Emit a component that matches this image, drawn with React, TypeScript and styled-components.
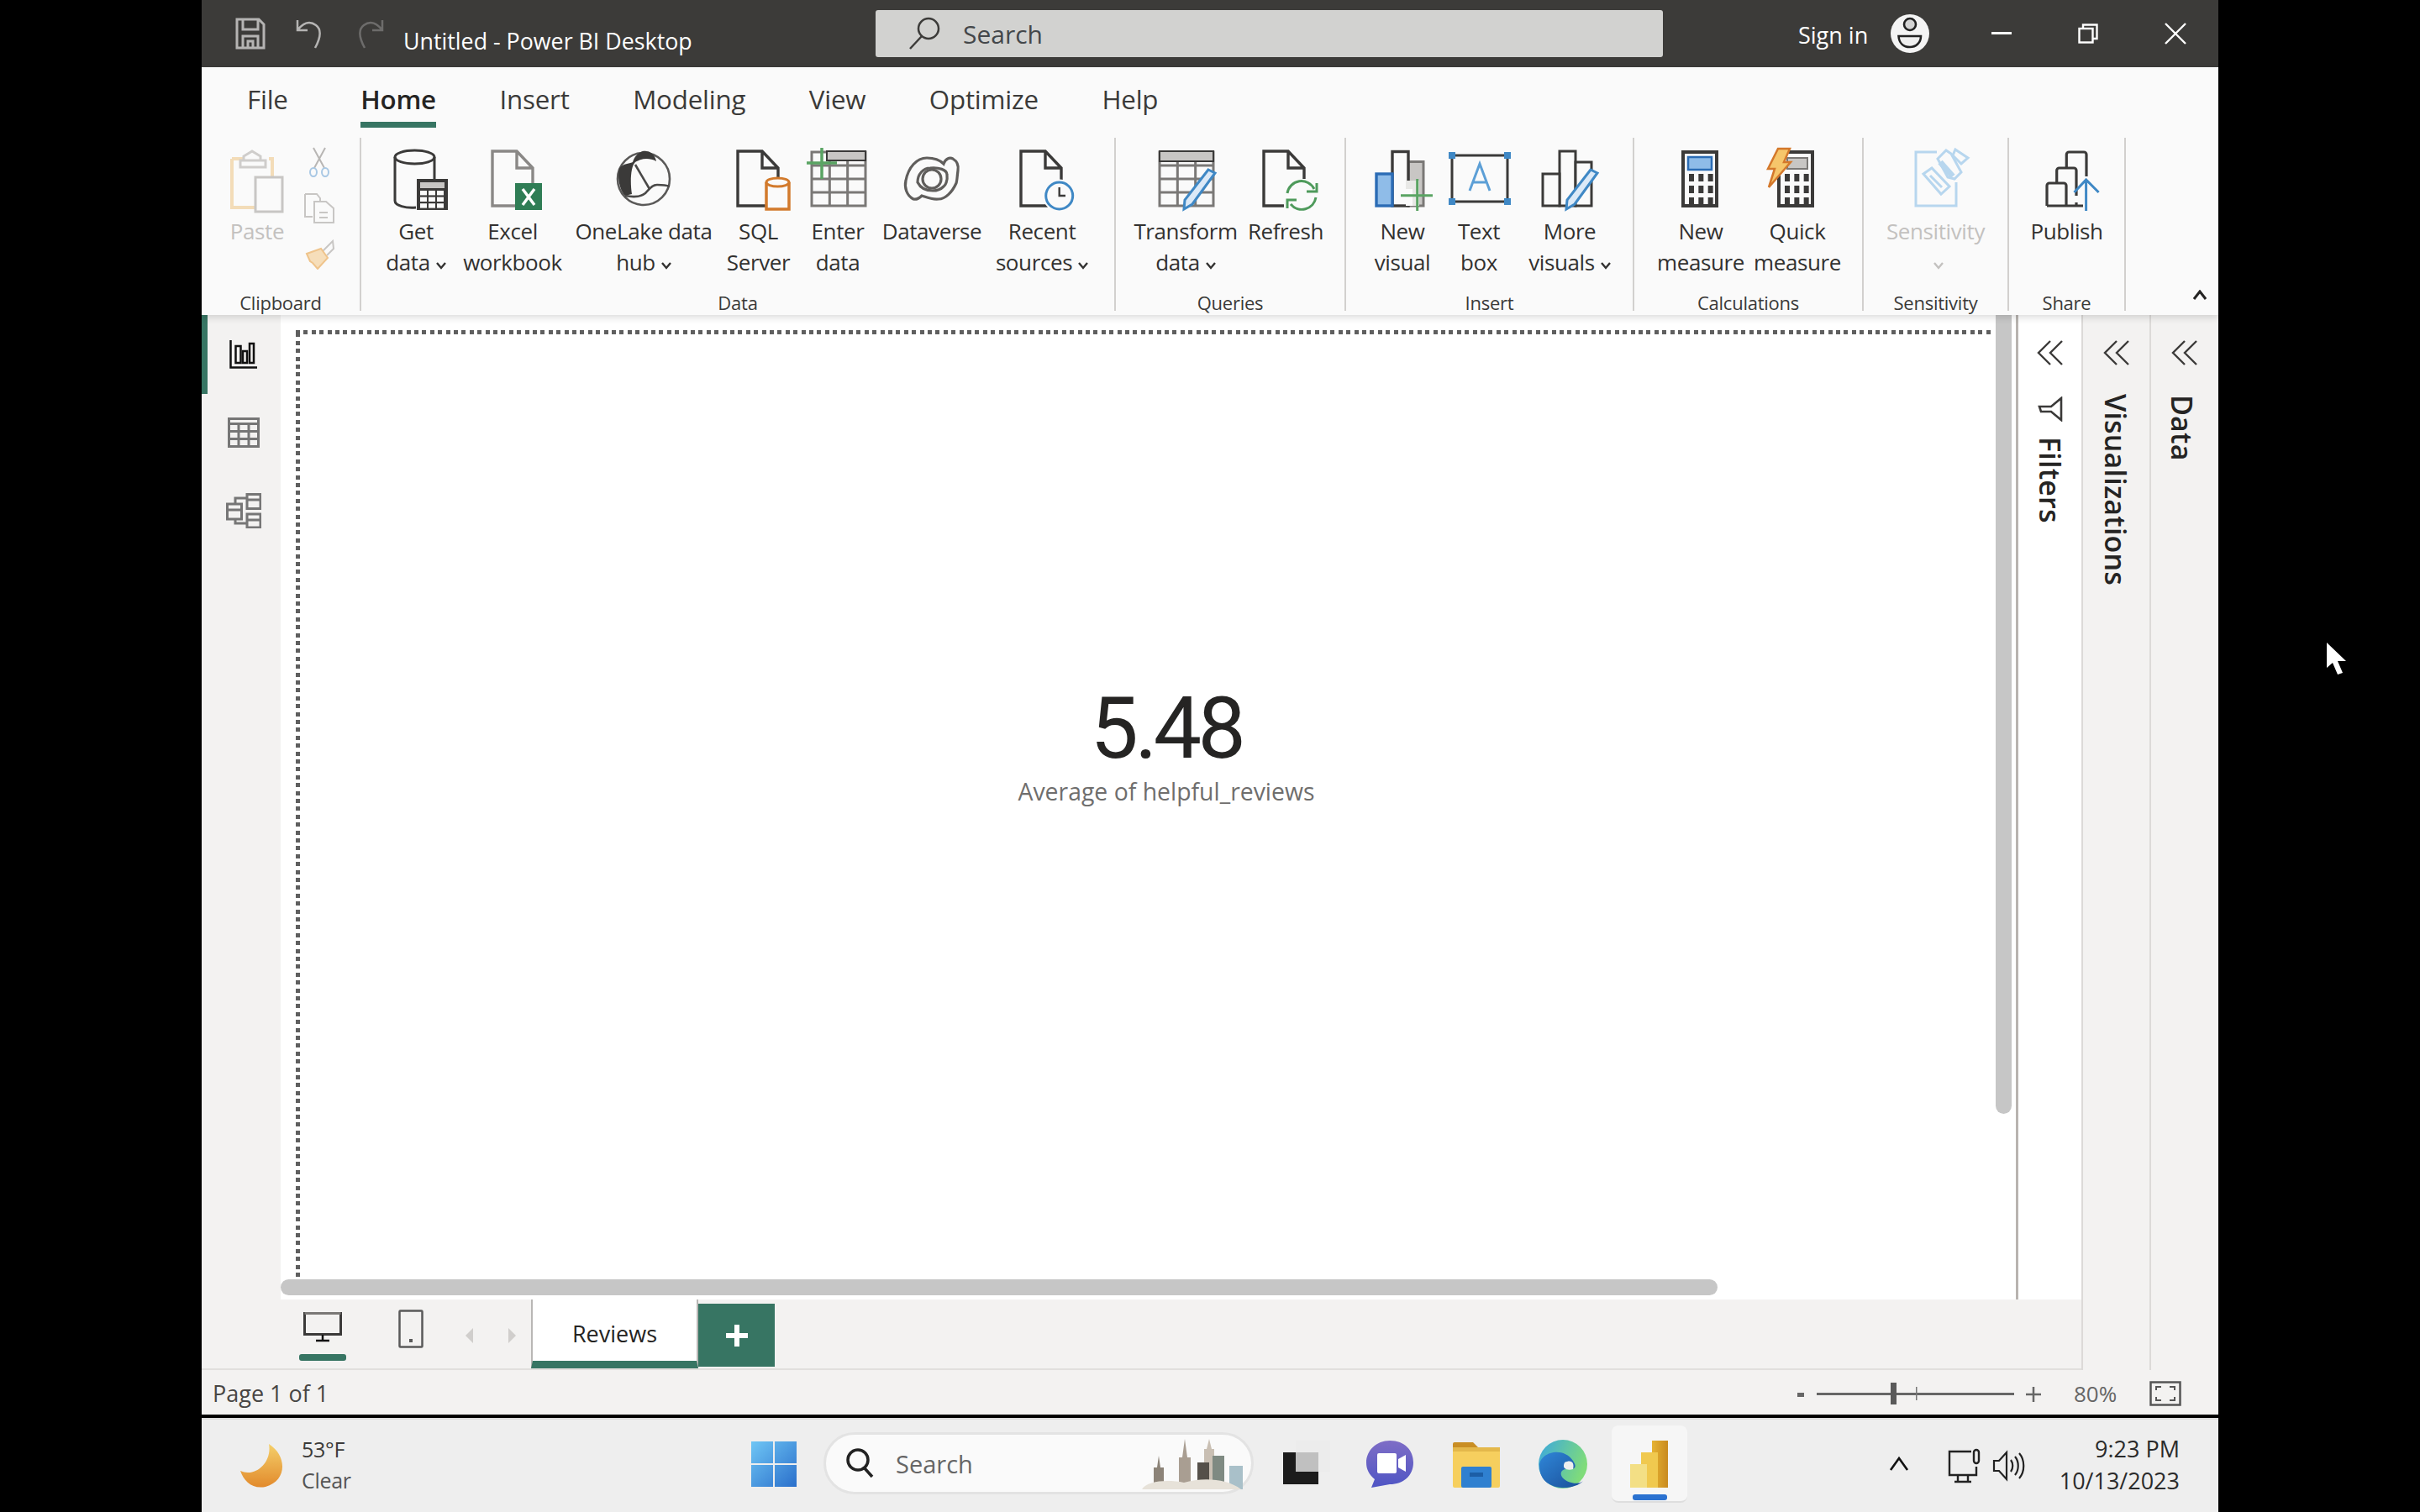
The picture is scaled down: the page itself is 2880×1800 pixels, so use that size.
import React from "react";
import styled, { createGlobalStyle } from "styled-components";

const GlobalStyle = createGlobalStyle`
  html, body { margin: 0; padding: 0; background: #000; }
  body { font-family: "Open Sans", "Liberation Sans", sans-serif; color: #252423; }
  * { box-sizing: border-box; }
`;

const Screen = styled.div`
  width: 2880px;
  height: 1800px;
  background: #000;
  padding: 0 240px;
  position: relative;
  overflow: hidden;
`;
const Desktop = styled.div`
  width: 2400px;
  height: 1800px;
  display: flex;
  flex-direction: column;
`;

/* title bar */
const TitleBar = styled.header`
  height: 80px;
  flex: none;
  background: #3c3b39;
  display: flex;
  align-items: center;
  color: #fff;
`;
const QuickAccess = styled.div`
  width: 802px;
  flex: none;
  display: flex;
  align-items: center;
  padding-left: 40px;
  gap: 36px;
`;
const WindowTitle = styled.span`
  font-size: 26.8px;
  padding-top: 16px;
  margin-left: -14px;
  white-space: nowrap;
`;
const SearchBox = styled.div`
  width: 937px;
  height: 56px;
  flex: none;
  background: #d2d2d0;
  border-radius: 3px;
  display: flex;
  align-items: center;
  gap: 26px;
  padding-left: 38px;
  color: #44474a;
  font-size: 30px;
`;
const TitleRight = styled.div`
  flex: 1;
  display: flex;
  align-items: center;
  padding-left: 161px;
`;
const SignIn = styled.span`
  font-size: 27px;
  width: 110px;
  padding-top: 2px;
  white-space: nowrap;
`;
const WinButtons = styled.div`
  display: flex;
  margin-left: 74px;
  gap: 79px;
  align-items: center;
`;

/* ribbon */
const Ribbon = styled.section`
  height: 295px;
  flex: none;
  background: #fafafa;
  position: relative;
  z-index: 2;
  box-shadow: 0 3px 8px rgba(0, 0, 0, 0.14);
`;
const MenuBar = styled.nav`
  height: 72px;
  display: flex;
  padding-left: 54px;
  gap: 75.5px;
`;
const MenuItem = styled.div<{ $active?: boolean; $first?: boolean }>`
  height: 72px;
  padding-top: 14px;
  font-size: 31.3px;
  line-height: 48px;
  letter-spacing: -0.2px;
  color: ${(p) => (p.$active ? "#252423" : "#3b3a39")};
  font-weight: ${(p) => (p.$active ? 600 : 400)};
  border-bottom: 7px solid ${(p) => (p.$active ? "#377563" : "transparent")};
  margin-right: ${(p) => (p.$first ? "11px" : "0")};
  white-space: nowrap;
`;
const GroupRow = styled.div`
  display: flex;
  padding-top: 12px;
  height: 218px;
`;
const Group = styled.div<{ $w: number }>`
  width: ${(p) => p.$w}px;
  flex: none;
  height: 206px;
  border-right: 2px solid #d2d0ce;
  padding-top: 11px;
  display: flex;
  flex-direction: column;
`;
const GroupTools = styled.div<{ $pl?: number }>`
  height: 172px;
  display: flex;
  padding-left: ${(p) => p.$pl ?? 0}px;
`;
const GroupLabel = styled.div`
  height: 23px;
  line-height: 26px;
  font-size: 22px;
  letter-spacing: -0.25px;
  text-align: center;
  color: #3b3a39;
`;
const Tool = styled.div<{ $w: number; $off?: boolean }>`
  width: ${(p) => p.$w}px;
  flex: none;
  display: flex;
  flex-direction: column;
  align-items: center;
  color: ${(p) => (p.$off ? "#c3c1bf" : "#323130")};
`;
const ToolIcon = styled.svg`
  width: 80px;
  height: 80px;
  flex: none;
  margin-bottom: 2px;
  overflow: visible;
`;
const ToolLabel = styled.div`
  font-size: 26px;
  line-height: 37px;
  letter-spacing: -0.4px;
  text-align: center;
  white-space: nowrap;
`;
const SmallTools = styled.div`
  width: 44px;
  flex: none;
  margin-left: 4px;
  display: flex;
  flex-direction: column;
  align-items: center;
  gap: 19px;
`;
const CollapseSlot = styled.div`
  flex: 1;
  display: flex;
  justify-content: flex-end;
  align-items: flex-end;
  height: 193px;
  padding-right: 14px;
`;

/* body */
const Body = styled.div`
  flex: 1;
  min-height: 0;
  display: flex;
  background: #f3f2f1;
`;
const MainColumn = styled.div`
  width: 2237px;
  flex: none;
  display: flex;
  flex-direction: column;
`;
const Workspace = styled.div`
  height: 1172px;
  flex: none;
  display: flex;
`;
const SideNav = styled.nav`
  width: 94px;
  flex: none;
  display: flex;
  flex-direction: column;
`;
const NavItem = styled.div<{ $active?: boolean; $h: number }>`
  height: ${(p) => p.$h}px;
  display: flex;
  align-items: center;
  justify-content: center;
  border-left: 7px solid ${(p) => (p.$active ? "#377563" : "transparent")};
  padding-right: 2px;
`;
const Canvas = styled.main`
  flex: 1;
  min-width: 0;
  background: #fff;
  display: grid;
  grid-template-columns: 1fr 19px;
  grid-template-rows: 1fr 19px;
  padding: 0 5px 5px 0;
  row-gap: 3px;
  column-gap: 5px;
`;
const PageArea = styled.div`
  padding: 18px 0 0 18px;
  min-height: 0;
`;
const ReportPage = styled.div`
  height: 100%;
  background-image:
    repeating-linear-gradient(90deg, #5f5f5f 0 5px, transparent 5px 9.4px),
    repeating-linear-gradient(0deg, #5f5f5f 0 5px, transparent 5px 9.4px);
  background-size: 100% 5px, 5px 100%;
  background-position: 0 0, 0 0;
  background-repeat: no-repeat;
  display: flex;
  flex-direction: column;
  align-items: center;
  justify-content: center;
  padding: 0 0 136px 54px;
`;
const KpiValue = styled.div`
  font-family: Roboto, "Liberation Sans", sans-serif;
  font-size: 102px;
  line-height: 100px;
  letter-spacing: -4.5px;
  color: #252423;
`;
const KpiLabel = styled.div`
  font-size: 28.4px;
  line-height: 36px;
  margin-top: 7px;
  color: #6f6e6d;
`;
const VScroll = styled.div`
  background: #c6c6c6;
  height: 951px;
  border-radius: 0 0 10px 10px;
`;
const HScroll = styled.div`
  background: #c6c6c6;
  width: 1710px;
  height: 19px;
  border-radius: 10px;
  grid-column: 1 / 3;
`;
const Pane = styled.aside<{ $w: number; $bg: string; $line: string; $lw?: number }>`
  width: ${(p) => p.$w}px;
  flex: none;
  background: ${(p) => p.$bg};
  border-left: ${(p) => p.$lw ?? 2}px solid ${(p) => p.$line};
  display: flex;
  flex-direction: column;
  align-items: center;
  padding-top: 30px;
`;
const PaneTitle = styled.div<{ $mt: number; $ml?: number }>`
  writing-mode: vertical-rl;
  font-size: 34px;
  font-weight: 600;
  line-height: 40px;
  letter-spacing: 0.2px;
  color: #252423;
  margin-top: ${(p) => p.$mt}px;
  margin-left: ${(p) => p.$ml ?? 0}px;
`;
const PaneIcon = styled.svg`
  width: 30px;
  height: 30px;
  flex: none;
  margin-top: 37px;
  transform: rotate(90deg);
`;

/* page tabs */
const TabBar = styled.div`
  height: 85px;
  flex: none;
  display: flex;
  padding-left: 98px;
  border-bottom: 3px solid #e1dfdd;
`;
const ViewButton = styled.div<{ $w: number; $ml?: number; $pt?: number; $active?: boolean }>`
  width: ${(p) => p.$w}px;
  margin-left: ${(p) => p.$ml ?? 0}px;
  height: 73px;
  flex: none;
  display: flex;
  justify-content: center;
  padding-top: ${(p) => p.$pt ?? 12}px;
  border-bottom: 8px solid transparent;
  position: relative;
  ${(p) =>
    p.$active &&
    `&::after{content:'';position:absolute;left:${(p.$w - 56) / 2}px;right:${(p.$w - 56) / 2}px;bottom:-8px;height:8px;background:#377563;border-radius:3px;}`}
`;
const PageTab = styled.div`
  width: 199px;
  height: 82px;
  flex: none;
  background: #fff;
  border-left: 2px solid #b9b7b5;
  border-right: 2px solid #b9b7b5;
  border-bottom: 9px solid #377563;
  padding-top: 7px;
  font-size: 27px;
  display: flex;
  align-items: center;
  justify-content: center;
  color: #252423;
`;
const AddTab = styled.div`
  width: 91px;
  height: 75px;
  margin-top: 5px;
  flex: none;
  background: #377563;
  display: flex;
  align-items: center;
  justify-content: center;
`;

/* status bar */
const StatusBar = styled.footer`
  height: 53px;
  flex: none;
  background: #f3f2f1;
  display: flex;
  align-items: center;
  padding: 2px 44px 0 13px;
  font-size: 27px;
  color: #484644;
`;
const StatusSpacer = styled.div`
  flex: 1;
`;
const ZoomSlider = styled.svg`
  width: 300px;
  height: 40px;
  flex: none;
`;
const ZoomValue = styled.span`
  width: 54px;
  margin: 0 36px 0 30px;
  font-size: 26px;
  color: #666;
  white-space: nowrap;
`;

const Divider = styled.div`
  height: 4px;
  flex: none;
  background: #000;
`;

/* taskbar */
const Taskbar = styled.footer`
  height: 112px;
  flex: none;
  background: #eeeeee;
  border-top: 2px solid #dcdcdc;
  display: grid;
  grid-template-columns: 654px 1120px 1fr;
  align-items: center;
`;
const Weather = styled.div`
  display: flex;
  align-items: center;
  gap: 20px;
  padding-left: 46px;
`;
const WeatherText = styled.div`
  font-size: 25px;
  line-height: 37px;
  letter-spacing: -0.3px;
  margin-top: -3px;
  color: #3b3a39;
  > span {
    display: block;
    color: #555;
  }
`;
const TaskCenter = styled.div`
  display: flex;
  align-items: center;
  padding-bottom: 4px;
`;
const PillSearch = styled.div`
  width: 512px;
  height: 74px;
  margin: 0 7px 2px 32px;
  flex: none;
  background: #fafafa;
  border: 3px solid #e3e3e3;
  border-radius: 37px;
  display: flex;
  align-items: center;
  padding: 0 8px 0 23px;
  gap: 24px;
  font-size: 29px;
  color: #666;
`;
const PillSpacer = styled.div`
  flex: 1;
`;
const TaskSlot = styled.div<{ $active?: boolean }>`
  width: 103px;
  height: 92px;
  flex: none;
  display: flex;
  align-items: flex-start;
  justify-content: center;
  padding-top: 18px;
  position: relative;
  ${(p) =>
    p.$active &&
    `&::before{content:'';position:absolute;left:7px;right:6px;top:0;bottom:0;background:#f6f6f6;border-radius:8px;border-bottom:2px solid #dedede;}
     &::after{content:'';position:absolute;left:32px;right:30px;bottom:3px;height:7px;background:#2b72d0;border-radius:3px;}`}
`;
const TaskIcon = styled.svg`
  width: 60px;
  height: 56px;
  position: relative;
  z-index: 1;
  overflow: visible;
`;
const Tray = styled.div`
  display: flex;
  align-items: center;
  justify-content: flex-end;
  padding-right: 46px;
`;
const TrayIcon = styled.svg<{ $mr: number }>`
  width: 40px;
  height: 42px;
  flex: none;
  margin-right: ${(p) => p.$mr}px;
  overflow: visible;
`;
const Clock = styled.div`
  font-size: 27px;
  line-height: 38px;
  margin-top: -3px;
  text-align: right;
  color: #2b2b2b;
  white-space: nowrap;
`;
const Cursor = styled.svg`
  position: absolute;
  left: 2768px;
  top: 765px;
  width: 26px;
  height: 40px;
`;

const ink = "#3b3a39";
const grey = "#7a7876";

const Doc = ({ x, y, w = 48, h = 65, c = ink }: { x: number; y: number; w?: number; h?: number; c?: string }) => (
  <path
    d={`M${x} ${y}H${x + w - 19}L${x + w} ${y + 20}V${y + h}H${x}ZM${x + w - 19} ${y}V${y + 20}H${x + w}`}
    fill="#fafafa"
    stroke={c}
    strokeWidth="3.4"
  />
);

const Grid = ({ x, y, w, h, cols, rows, c = grey }: { x: number; y: number; w: number; h: number; cols: number; rows: number; c?: string }) => (
  <g stroke={c} strokeWidth="3" fill="none">
    <rect x={x} y={y} width={w} height={h} />
    {Array.from({ length: cols - 1 }, (_, i) => (
      <line key={i} x1={x + ((i + 1) * w) / cols} y1={y} x2={x + ((i + 1) * w) / cols} y2={y + h} />
    ))}
    {Array.from({ length: rows - 1 }, (_, i) => (
      <line key={i} x1={x} y1={y + ((i + 1) * h) / rows} x2={x + w} y2={y + ((i + 1) * h) / rows} />
    ))}
  </g>
);

const Pen = ({ x = 72, y = 30 }: { x?: number; y?: number }) => (
  <path d={`M${x - 5} ${y - 3}L${x + 3} ${y + 1}L${x - 24} ${y + 38}L${x - 34} ${y + 44}L${x - 33} ${y + 33}Z`} fill="#dbe9f7" stroke="#3f88c5" strokeWidth="3" />
);

const Caret = styled.svg`
  width: 12px;
  height: 9px;
  margin-left: 7px;
  vertical-align: 1px;
`;
const Down = () => (
  <Caret viewBox="0 0 12 9">
    <path d="M1 1l5 6 5-6" fill="none" stroke="currentColor" strokeWidth="2.4" />
  </Caret>
);

const Calc = ({ x, y, w, h, dark = ink }: { x: number; y: number; w: number; h: number; dark?: string }) => {
  const cw = w / 3;
  return (
    <g>
      <rect x={x} y={y} width={w} height={h} fill="#fafafa" stroke={dark} strokeWidth="4" />
      {[0, 1, 2].map((r) =>
        [0, 1, 2].map((c) => (
          <rect key={`${r}${c}`} x={x + 7 + c * (cw - 2)} y={y + 26 + r * 14} width="6" height="9" fill={dark} />
        ))
      )}
    </g>
  );
};

const Chevrons = () => (
  <svg width="32" height="30" viewBox="0 0 32 30" fill="none" stroke="#3b3a39" strokeWidth="2.4">
    <path d="M16 1L2 15l14 14M30 1L16 15l14 14" />
  </svg>
);

function App() {
  return (
    <Screen>
      <GlobalStyle />
      <Desktop>
        <TitleBar>
          <QuickAccess>
            <svg width="36" height="38" viewBox="0 0 36 38" fill="none" stroke="#b5b4b3" strokeWidth="3">
              <path d="M2 2h26l6 6v28H2zM9 2v12h18V2M9 36V22h18v14M15 36v-8h6v8" />
            </svg>
            <svg width="36" height="38" viewBox="0 0 36 38" fill="none" stroke="#b5b4b3" strokeWidth="2.5" style={{ marginLeft: -1 }}>
              <path d="M3 3v12h12M3 15c6-8 14-12 22-6 8 6 5 16-1 27" />
            </svg>
            <svg width="36" height="38" viewBox="0 0 36 38" fill="none" stroke="#6d6c6b" strokeWidth="2.5" style={{ marginLeft: -1 }}>
              <path d="M33 3v12H21M33 15c-6-8-14-12-22-6C3 15 6 25 12 36" />
            </svg>
            <WindowTitle>Untitled - Power BI Desktop</WindowTitle>
          </QuickAccess>
          <SearchBox>
            <svg width="40" height="40" viewBox="0 0 40 40" fill="none" stroke="#3c3b39" strokeWidth="2.5">
              <circle cx="25" cy="14" r="12" />
              <path d="M17 23L3 38" />
            </svg>
            Search
          </SearchBox>
          <TitleRight>
            <SignIn>Sign in</SignIn>
            <svg width="46" height="46" viewBox="0 0 46 46">
              <circle cx="23" cy="23" r="23" fill="#f4f4f4" />
              <circle cx="23" cy="12" r="7" fill="#d4d4d4" stroke="#222" strokeWidth="2.6" />
              <path d="M9.5 26H36C36 34 30 39 23 39C15 39 10 34 9.5 26Z" fill="#efefef" stroke="#222" strokeWidth="2.6" />
            </svg>
            <WinButtons>
              <svg width="24" height="4" viewBox="0 0 24 4">
                <rect width="24" height="3" fill="#fff" />
              </svg>
              <svg width="24" height="24" viewBox="0 0 24 24" fill="none" stroke="#fff" strokeWidth="2.4">
                <rect x="1.5" y="6" width="16" height="16.5" />
                <path d="M6 6V1.5h16.5V18H18" />
              </svg>
              <svg width="26" height="26" viewBox="0 0 26 26" stroke="#fff" strokeWidth="2.4">
                <path d="M1 1l24 24M25 1L1 25" />
              </svg>
            </WinButtons>
          </TitleRight>
        </TitleBar>

        <Ribbon>
          <MenuBar>
            <MenuItem $first>File</MenuItem>
            <MenuItem $active>Home</MenuItem>
            <MenuItem>Insert</MenuItem>
            <MenuItem>Modeling</MenuItem>
            <MenuItem>View</MenuItem>
            <MenuItem>Optimize</MenuItem>
            <MenuItem>Help</MenuItem>
          </MenuBar>
          <GroupRow>
            <Group $w={190}>
              <GroupTools $pl={18}>
                <Tool $w={96} $off>
                  <ToolIcon viewBox="0 0 80 80">
                    <path d="M10 14H26M54 14H58V58M10 14V72H38" fill="none" stroke="#f3dcb8" strokeWidth="4" />
                    <path d="M24 20V11L34 5L44 11V20Z" fill="#fafafa" stroke="#cfcdcb" strokeWidth="3" />
                    <path d="M20 16H50V24H20Z" fill="#fafafa" stroke="#cfcdcb" strokeWidth="3" />
                    <rect x="38" y="36" width="32" height="41" fill="#fafafa" stroke="#c8c6c4" strokeWidth="3" />
                  </ToolIcon>
                  <ToolLabel>Paste</ToolLabel>
                </Tool>
                <SmallTools>
                  <svg width="36" height="36" viewBox="0 0 36 36" fill="none" strokeWidth="2">
                    <path d="M11 1l13 24M25 1L12 25" stroke="#b8b6b4" />
                    <ellipse cx="11" cy="30" rx="4" ry="5" stroke="#a9c8e4" />
                    <ellipse cx="25" cy="30" rx="4" ry="5" stroke="#a9c8e4" />
                  </svg>
                  <svg width="36" height="36" viewBox="0 0 36 36" fill="none" stroke="#c8c6c4" strokeWidth="2">
                    <path d="M1 1h14l4 5v4M10 28H1V1" />
                    <path d="M12 10h14l9 8v17H12zM18 23h10M18 29h10" />
                  </svg>
                  <svg width="36" height="36" viewBox="0 0 36 36" fill="none" strokeWidth="2">
                    <path d="M22 14L34 2L35 11L27 19" fill="#fafafa" stroke="#c8c6c4" />
                    <path d="M3 17L20 11L28 22L16 35L10 28L7 26Z" fill="#f6deba" stroke="#efc48c" />
                  </svg>
                </SmallTools>
              </GroupTools>
              <GroupLabel>Clipboard</GroupLabel>
            </Group>

            <Group $w={898}>
              <GroupTools $pl={17}>
                <Tool $w={96}>
                  <ToolIcon viewBox="0 0 80 80">
                    <path d="M15 12V64C15 70 28 73 40 72" fill="none" stroke={ink} strokeWidth="3" />
                    <path d="M62 12V38" fill="none" stroke={ink} strokeWidth="3" />
                    <ellipse cx="38.5" cy="12" rx="23.5" ry="8" fill="none" stroke={ink} strokeWidth="3" />
                    <rect x="41" y="38" width="37" height="37" fill="#3b3a39" />
                    <rect x="45" y="42" width="29" height="7" fill="#c8c6c4" />
                    {[0, 1, 2].map((r) =>
                      [0, 1, 2].map((c) => <rect key={`${r}${c}`} x={45 + c * 10} y={52 + r * 7.6} width="8" height="5.4" fill="#fafafa" />)
                    )}
                  </ToolIcon>
                  <ToolLabel>
                    Get
                    <br />
                    data
                    <Down />
                  </ToolLabel>
                </Tool>
                <Tool $w={134}>
                  <ToolIcon viewBox="0 0 80 80">
                    <Doc x={16} y={5} c="#8a8886" />
                    <rect x="43" y="43" width="32" height="32" fill="#2f7d55" />
                    <path d="M52 50l14 19M66 50L52 69" stroke="#fff" strokeWidth="3.4" />
                  </ToolIcon>
                  <ToolLabel>
                    Excel
                    <br />
                    workbook
                  </ToolLabel>
                </Tool>
                <Tool $w={178}>
                  <ToolIcon viewBox="0 0 80 80">
                    <circle cx="40" cy="38" r="31" fill="none" stroke="#5a5958" strokeWidth="2.6" />
                    <path d="M27 18C30 8 38 4 43 5C50 5 54 12 55 17C46 12 36 14 30 18C24 24 24 44 26 56L18 58C10 50 8 30 12 24C16 20 22 20 27 18Z" fill="#3b3a39" />
                    <path d="M30 21L47 50" fill="none" stroke="#4a4948" strokeWidth="2.6" />
                    <path d="M18 58C28 60 36 60 42 55C47 50 50 45 56 45C62 45 66 45 71 47" fill="none" stroke="#4a4948" strokeWidth="2.6" />
                  </ToolIcon>
                  <ToolLabel>
                    OneLake data
                    <br />
                    hub
                    <Down />
                  </ToolLabel>
                </Tool>
                <Tool $w={95}>
                  <ToolIcon viewBox="0 0 80 80">
                    <Doc x={15} y={5} />
                    <path d="M49 42V74H76V42" fill="#fafafa" stroke="#d27a2c" strokeWidth="3.5" />
                    <ellipse cx="62.5" cy="42" rx="13.5" ry="5" fill="#fafafa" stroke="#d27a2c" strokeWidth="3" />
                  </ToolIcon>
                  <ToolLabel>
                    SQL
                    <br />
                    Server
                  </ToolLabel>
                </Tool>
                <Tool $w={94}>
                  <ToolIcon viewBox="0 0 80 80">
                    <Grid x={9} y={6} w={64} h={64} cols={3} rows={4} />
                    <rect x="27" y="5" width="46" height="11" fill="#c8c6c4" stroke={ink} strokeWidth="2" />
                    <path d="M21 1v37M3 19h36" stroke="#5aa463" strokeWidth="3.5" />
                  </ToolIcon>
                  <ToolLabel>
                    Enter
                    <br />
                    data
                  </ToolLabel>
                </Tool>
                <Tool $w={130}>
                  <ToolIcon viewBox="0 0 80 80">
                    <g fill="none" stroke="#605e5c" strokeWidth="3.2">
                      <path d="M18 62C10 58 7 48 9 40C12 24 22 13 34 13C42 13 49 15 54 20C56 14 61 12 65 14C70 17 72 22 71 28C70 36 70 40 69 43C64 54 56 62 48 62C40 63 34 60 28 58C25 61 22 63 18 62Z" />
                      <path d="M23 42C23 32 30 25 38 25C48 24 58 27 58 33C59 40 56 46 54 47C50 51 46 52 41 52C34 52 27 50 23 42Z" />
                      <circle cx="40" cy="38" r="11" />
                    </g>
                  </ToolIcon>
                  <ToolLabel>Dataverse</ToolLabel>
                </Tool>
                <Tool $w={132}>
                  <ToolIcon viewBox="0 0 80 80">
                    <Doc x={15} y={5} />
                    <circle cx="60.7" cy="58" r="17" fill="#fafafa" stroke="#fafafa" strokeWidth="5" />
                    <circle cx="60.7" cy="58" r="16" fill="#fafafa" stroke="#3f88c5" strokeWidth="3" />
                    <path d="M60.7 48v10H68" fill="none" stroke={ink} strokeWidth="2.4" />
                  </ToolIcon>
                  <ToolLabel>
                    Recent
                    <br />
                    sources
                    <Down />
                  </ToolLabel>
                </Tool>
              </GroupTools>
              <GroupLabel>Data</GroupLabel>
            </Group>

            <Group $w={274}>
              <GroupTools $pl={20}>
                <Tool $w={126}>
                  <ToolIcon viewBox="0 0 80 80">
                    <Grid x={9} y={6} w={64} h={64} cols={3} rows={4} />
                    <rect x="9" y="5" width="64" height="12" fill="#c8c6c4" stroke={ink} strokeWidth="2" />
                    <Pen />
                  </ToolIcon>
                  <ToolLabel>
                    Transform
                    <br />
                    data
                    <Down />
                  </ToolLabel>
                </Tool>
                <Tool $w={112}>
                  <ToolIcon viewBox="0 0 80 80">
                    <Doc x={14} y={5} />
                    <rect x="38" y="38" width="42" height="40" fill="#fafafa" />
                    <g fill="none" stroke="#4e9a5b" strokeWidth="3">
                      <path d="M42 55A17 17 0 0 1 74 50" />
                      <path d="M65 53H77V43" />
                      <path d="M76 60A17 17 0 0 1 46 68" />
                      <path d="M53 63H42V73" />
                    </g>
                  </ToolIcon>
                  <ToolLabel>Refresh</ToolLabel>
                </Tool>
              </GroupTools>
              <GroupLabel>Queries</GroupLabel>
            </Group>

            <Group $w={343}>
              <GroupTools $pl={20}>
                <Tool $w={94}>
                  <ToolIcon viewBox="0 0 80 80">
                    <rect x="47" y="17.5" width="18" height="52.5" fill="#c8c6c4" stroke="#7a7876" strokeWidth="3" />
                    <rect x="28" y="5.5" width="19" height="64.5" fill="#fafafa" stroke={ink} strokeWidth="3.4" />
                    <rect x="9" y="32" width="19" height="38" fill="#8fbce8" stroke="#2b6cb5" strokeWidth="3.4" />
                    <rect x="44" y="40" width="16" height="30" fill="#e8e8e6" />
                    <rect x="44" y="50" width="8" height="20" fill="#fafafa" />
                    <path d="M57.7 38v38M38 57.7h38" stroke="#5aa463" strokeWidth="3" />
                  </ToolIcon>
                  <ToolLabel>
                    New
                    <br />
                    visual
                  </ToolLabel>
                </Tool>
                <Tool $w={88}>
                  <ToolIcon viewBox="0 0 80 80">
                    <rect x="8" y="10" width="66" height="55" fill="none" stroke={ink} strokeWidth="3" />
                    {[[8, 10], [74, 10], [8, 65], [74, 65]].map(([x, y]) => (
                      <rect key={`${x}${y}`} x={x - 4} y={y - 4} width="8" height="8" fill="#3f88c5" />
                    ))}
                    <path d="M29 52L41 20L53 52M33 42H49" fill="none" stroke="#5c9fd6" strokeWidth="3" />
                  </ToolIcon>
                  <ToolLabel>
                    Text
                    <br />
                    box
                  </ToolLabel>
                </Tool>
                <Tool $w={128}>
                  <ToolIcon viewBox="0 0 80 80">
                    <g fill="#fafafa" stroke={ink} strokeWidth="3">
                      <rect x="28" y="5" width="19" height="65" />
                      <rect x="47" y="18" width="19" height="52" />
                      <rect x="8" y="32" width="20" height="38" />
                    </g>
                    <Pen x={70} y={30} />
                  </ToolIcon>
                  <ToolLabel>
                    More
                    <br />
                    visuals
                    <Down />
                  </ToolLabel>
                </Tool>
              </GroupTools>
              <GroupLabel>Insert</GroupLabel>
            </Group>

            <Group $w={273}>
              <GroupTools $pl={20}>
                <Tool $w={118}>
                  <ToolIcon viewBox="0 0 80 80">
                    <Calc x={19} y={6} w={40} h={64} />
                    <rect x="25" y="12" width="28" height="15" fill="#8fbce8" stroke="#2b6cb5" strokeWidth="2.5" />
                  </ToolIcon>
                  <ToolLabel>
                    New
                    <br />
                    measure
                  </ToolLabel>
                </Tool>
                <Tool $w={112}>
                  <ToolIcon viewBox="0 0 80 80">
                    <Calc x={18} y={6} w={40} h={64} />
                    <rect x="28" y="13" width="24" height="13" fill="#c8c6c4" stroke={grey} strokeWidth="2" />
                    <path d="M17 2H31L24 18H32L6 48L13 26H5Z" fill="#f6c66b" stroke="#d4782b" strokeWidth="2.5" />
                  </ToolIcon>
                  <ToolLabel>
                    Quick
                    <br />
                    measure
                  </ToolLabel>
                </Tool>
              </GroupTools>
              <GroupLabel>Calculations</GroupLabel>
            </Group>

            <Group $w={173}>
              <GroupTools>
                <Tool $w={171} $off>
                  <ToolIcon viewBox="0 0 80 80">
                    <path d="M41 6H16V70H64V42" fill="none" stroke="#b7d6ee" strokeWidth="3" />
                    <path d="M25 32L35 25L56 47L46 56Z" fill="#fafafa" stroke="#b7d6ee" strokeWidth="3" />
                    <path d="M33 34L47 48" stroke="#b7d6ee" strokeWidth="3" />
                    <path d="M42 14L52 4L58 8L70 30L62 38L54 36Z" fill="#fafafa" stroke="#b7d6ee" strokeWidth="3" />
                    <path d="M45 18L60 35" stroke="#b7d6ee" strokeWidth="7" />
                    <path d="M63 3L78 13L70 20L60 10Z" fill="#fafafa" stroke="#b7d6ee" strokeWidth="3" />
                  </ToolIcon>
                  <ToolLabel>
                    Sensitivity
                    <br />
                    <Down />
                  </ToolLabel>
                </Tool>
              </GroupTools>
              <GroupLabel>Sensitivity</GroupLabel>
            </Group>

            <Group $w={139}>
              <GroupTools>
                <Tool $w={137}>
                  <ToolIcon viewBox="0 0 80 80">
                    <g fill="none" stroke={ink} strokeWidth="3.2">
                      <path d="M39.3 25V9a3 3 0 0 1 3-3H60a3 3 0 0 1 3 3V35" />
                      <path d="M27.7 43V28a3 3 0 0 1 3-3H48a3 3 0 0 1 3 3V58M51 66V70" />
                      <path d="M16 70V46a3 3 0 0 1 3-3H36a3 3 0 0 1 3 3V70" />
                      <path d="M16 70H59" />
                    </g>
                    <path d="M62.6 76V39M48.5 54L62.6 39L77.6 54" fill="none" stroke="#3f88c5" strokeWidth="3" />
                  </ToolIcon>
                  <ToolLabel>Publish</ToolLabel>
                </Tool>
              </GroupTools>
              <GroupLabel>Share</GroupLabel>
            </Group>

            <CollapseSlot>
              <svg width="16" height="12" viewBox="0 0 16 12">
                <path d="M1 11l7-9 7 9" fill="none" stroke="#252423" strokeWidth="3" />
              </svg>
            </CollapseSlot>
          </GroupRow>
        </Ribbon>

        <Body>
          <MainColumn>
            <Workspace>
              <SideNav>
                <NavItem $active $h={94}>
                  <svg width="34" height="34" viewBox="0 0 34 34" fill="none" stroke="#111" strokeWidth="2.5">
                    <path d="M1.5 0V32.5H33" />
                    <rect x="7.5" y="7" width="6" height="20" />
                    <rect x="16" y="13" width="5" height="14" />
                    <rect x="24" y="4" width="5" height="23" />
                  </svg>
                </NavItem>
                <NavItem $h={92}>
                  <svg width="38" height="36" viewBox="0 0 38 36" fill="none" stroke="#767676" strokeWidth="3">
                    <rect x="1.5" y="1.5" width="35" height="33" />
                    <path d="M1.5 7.5h35M13 7.5v27M25 7.5v27M1.5 16.5h35M1.5 25.5h35" />
                  </svg>
                </NavItem>
                <NavItem $h={94}>
                  <svg width="42" height="42" viewBox="0 0 42 42" fill="none" stroke="#767676" strokeWidth="3">
                    <rect x="1.5" y="13" width="17" height="18" />
                    <path d="M1.5 20h17" />
                    <rect x="25" y="1.5" width="16" height="17" />
                    <path d="M25 8h16" />
                    <rect x="25" y="25" width="16" height="16" />
                    <path d="M25 32h16M11 13V6h14M11 31v5h14" />
                  </svg>
                </NavItem>
              </SideNav>
              <Canvas>
                <PageArea>
                  <ReportPage>
                    <KpiValue>5.48</KpiValue>
                    <KpiLabel>Average of helpful_reviews</KpiLabel>
                  </ReportPage>
                </PageArea>
                <VScroll />
                <HScroll />
              </Canvas>
              <Pane $w={78} $bg="#fff" $line="#b8b4b0" $lw={3}>
                <Chevrons />
                <PaneIcon viewBox="0 0 30 30" fill="none" stroke="#3b3a39" strokeWidth="2.6">
                  <path d="M2 2h26L18 14v12l-6 2V14z" />
                </PaneIcon>
                <PaneTitle $mt={18}>Filters</PaneTitle>
              </Pane>
            </Workspace>
            <TabBar>
              <ViewButton $w={92} $active $pt={15}>
                <svg width="46" height="36" viewBox="0 0 46 36" fill="none">
                  <rect x="1.5" y="1.5" width="43" height="25" stroke="#3b3a39" strokeWidth="3" />
                  <path d="M1.5 1.5h43" stroke="#7a7876" strokeWidth="3" />
                  <path d="M23 27v6M15 34h16" stroke="#111" strokeWidth="2.5" />
                </svg>
              </ViewButton>
              <ViewButton $w={107} $ml={5}>
                <svg width="30" height="46" viewBox="0 0 30 46" fill="none" stroke="#5a5a5a" strokeWidth="2.5">
                  <rect x="1.5" y="1.5" width="27" height="43" rx="1" />
                  <rect x="13" y="35" width="4" height="4" fill="#5a5a5a" strokeWidth="0" />
                </svg>
              </ViewButton>
              <ViewButton $w={32} $pt={33}>
                <svg width="12" height="20" viewBox="0 0 12 20">
                  <path d="M11 1L2 10l9 9z" fill="#d0cecc" />
                </svg>
              </ViewButton>
              <ViewButton $w={44} $ml={14} $pt={33}>
                <svg width="12" height="20" viewBox="0 0 12 20">
                  <path d="M1 1l9 9-9 9z" fill="#d0cecc" />
                </svg>
              </ViewButton>
              <PageTab>Reviews</PageTab>
              <AddTab>
                <svg width="28" height="28" viewBox="0 0 28 28">
                  <path d="M11 1h6v10h10v6H17v10h-6V17H1v-6h10z" fill="#fff" />
                </svg>
              </AddTab>
            </TabBar>
          </MainColumn>
          <Pane $w={81} $bg="#f3f2f1" $line="#dcdad8">
            <Chevrons />
            <PaneTitle $mt={34} $ml={-2}>Visualizations</PaneTitle>
          </Pane>
          <Pane $w={82} $bg="#f3f2f1" $line="#dcdad8">
            <Chevrons />
            <PaneTitle $mt={35} $ml={-6}>Data</PaneTitle>
          </Pane>
        </Body>

        <StatusBar>
          Page 1 of 1
          <StatusSpacer />
          <ZoomSlider viewBox="0 0 300 40">
            <rect x="1" y="19" width="8" height="5" fill="#666" />
            <rect x="24" y="19" width="235" height="3" fill="#666" />
            <rect x="112" y="7" width="7" height="26" fill="#5a5a5a" />
            <rect x="142" y="12" width="1.5" height="16" fill="#777" />
            <path d="M282 12v18M273 21h18" stroke="#666" strokeWidth="2.5" />
          </ZoomSlider>
          <ZoomValue>80%</ZoomValue>
          <svg width="38" height="30" viewBox="0 0 38 30" fill="none" stroke="#555" strokeWidth="2.5">
            <rect x="1.5" y="1.5" width="35" height="27" />
            <path d="M8 11V7h6M24 7h6v4M8 19v4h6M24 23h6v-4" strokeWidth="2" />
          </svg>
        </StatusBar>
        <Divider />

        <Taskbar>
          <Weather>
            <svg width="53" height="52" viewBox="0 0 53 52">
              <defs>
                <linearGradient id="moon" x1="0" y1="0" x2="0" y2="1">
                  <stop offset="0" stopColor="#f4cf6a" />
                  <stop offset="1" stopColor="#e28a2c" />
                </linearGradient>
              </defs>
              <path d="M34 0C56 14 56 44 30 51C14 54 4 44 0 32C18 40 38 22 34 0Z" fill="url(#moon)" />
            </svg>
            <WeatherText>
              53°F
              <span>Clear</span>
            </WeatherText>
          </Weather>
          <TaskCenter>
            <svg width="54" height="54" viewBox="0 0 54 54" style={{ flex: "none" }}>
              <defs>
                <linearGradient id="win" gradientUnits="userSpaceOnUse" x1="0" y1="0" x2="54" y2="54">
                  <stop offset="0" stopColor="#6fc6f5" />
                  <stop offset="1" stopColor="#2a6fcb" />
                </linearGradient>
              </defs>
              <rect x="0" y="0" width="26" height="26" fill="url(#win)" />
              <rect x="28" y="0" width="26" height="26" fill="url(#win)" />
              <rect x="0" y="28" width="26" height="26" fill="url(#win)" />
              <rect x="28" y="28" width="26" height="26" fill="url(#win)" />
            </svg>
            <PillSearch>
              <svg width="36" height="38" viewBox="0 0 36 38" fill="none" stroke="#222" strokeWidth="3.5" style={{ flex: "none" }}>
                <circle cx="15" cy="15" r="12" />
                <path d="M23 25l9 10" />
              </svg>
              Search
              <PillSpacer />
              <svg width="122" height="62" viewBox="0 0 122 62" style={{ flex: "none" }}>
                <path d="M14 62V36h4l2-14 2 14h4v26z" fill="#8c8378" />
                <path d="M44 62V24h4l3-22 3 22h4v38z" fill="#a99e92" />
                <path d="M74 62V14h3l3-12 3 12h3v48z" fill="#c9bfb3" />
                <rect x="84" y="22" width="14" height="40" fill="#7f8a82" />
                <rect x="66" y="30" width="14" height="32" fill="#55504a" />
                <rect x="104" y="34" width="16" height="28" fill="#a9c0c9" />
                <path d="M0 62c6-10 30-12 50-8 20-6 50-6 68 8z" fill="#e7e2d9" />
              </svg>
            </PillSearch>
            <TaskSlot>
              <TaskIcon viewBox="0 0 60 56">
                <rect x="6" y="14" width="42" height="38" fill="#1c1c1c" />
                <rect x="21" y="0" width="41" height="37" fill="#ececec" />
                <rect x="21" y="14" width="27" height="23" fill="#c0c0c0" />
              </TaskIcon>
            </TaskSlot>
            <TaskSlot>
              <TaskIcon viewBox="0 0 60 56">
                <defs>
                  <linearGradient id="meet" x1="0" y1="0" x2="0" y2="1">
                    <stop offset="0" stopColor="#7e6dc6" />
                    <stop offset="1" stopColor="#4f55c4" />
                  </linearGradient>
                </defs>
                <path d="M30 0C48 0 58 12 58 26C58 42 46 52 30 52L8 56L12 46C5 40 2 34 2 26C2 12 14 0 30 0Z" fill="url(#meet)" />
                <rect x="15" y="15" width="23" height="24" rx="2" fill="#fff" />
                <path d="M40 22l9-5v20l-9-5z" fill="#fff" />
              </TaskIcon>
            </TaskSlot>
            <TaskSlot>
              <TaskIcon viewBox="0 0 60 56">
                <path d="M2 4a2 2 0 0 1 2-2h22l6 6H2z" fill="#c98e24" />
                <rect x="2" y="8" width="56" height="48" rx="2" fill="#f6cf5e" />
                <rect x="2" y="8" width="56" height="5" fill="#e4b84b" />
                <rect x="12" y="31" width="36" height="25" rx="2" fill="#2f80d0" />
                <rect x="22" y="38" width="16" height="5" fill="#1c5ea6" />
              </TaskIcon>
            </TaskSlot>
            <TaskSlot>
              <TaskIcon viewBox="0 0 60 56">
                <defs>
                  <linearGradient id="edgeA" x1="0" y1="0" x2="1" y2="0.4">
                    <stop offset="0" stopColor="#3aa7e0" />
                    <stop offset="1" stopColor="#7fdc7a" />
                  </linearGradient>
                  <linearGradient id="edgeB" x1="0" y1="0" x2="1" y2="1">
                    <stop offset="0" stopColor="#2f86d8" />
                    <stop offset="1" stopColor="#1a4f98" />
                  </linearGradient>
                </defs>
                <circle cx="30" cy="28" r="29" fill="url(#edgeA)" />
                <path d="M2 30C2 14 30 6 42 24C46 30 46 34 38 34C24 32 24 46 40 50C48 52 52 50 54 48C44 60 2 62 2 30Z" fill="url(#edgeB)" />
                <path d="M32 26c8-4 12 0 10 8-6 2-14 0-10-8z" fill="#eeeeee" />
              </TaskIcon>
            </TaskSlot>
            <TaskSlot $active>
              <TaskIcon viewBox="0 0 60 56">
                <defs>
                  <linearGradient id="biA" x1="0" y1="0" x2="1" y2="0">
                    <stop offset="0" stopColor="#e6b333" />
                    <stop offset="1" stopColor="#c98a1f" />
                  </linearGradient>
                </defs>
                <rect x="33" y="0" width="19" height="56" fill="url(#biA)" />
                <rect x="20" y="14" width="20" height="42" fill="#f0c94f" />
                <rect x="7" y="28" width="20" height="28" fill="#f3df85" />
              </TaskIcon>
            </TaskSlot>
          </TaskCenter>
          <Tray>
            <TrayIcon $mr={38} viewBox="0 0 40 42">
              <path d="M10 26l10-14 10 14" fill="none" stroke="#111" strokeWidth="2.6" />
            </TrayIcon>
            <TrayIcon $mr={13} viewBox="0 0 40 42" fill="none" stroke="#222" strokeWidth="2.4">
              <path d="M28 4H2V32H34V22" />
              <path d="M12 32v8M24 32v8M8 40h20" />
              <rect x="31" y="2" width="6" height="16" rx="3" fill="#eee" />
            </TrayIcon>
            <TrayIcon $mr={40} viewBox="0 0 40 42" fill="none" stroke="#222" strokeWidth="2.2">
              <path d="M2 15h6l9-10v32l-9-10H2z" />
              <path d="M22 14c3 4 3 10 0 14M27 10c5 6 5 16 0 22M32 6c7 8 7 22 0 30" />
            </TrayIcon>
            <Clock>
              9:23 PM
              <br />
              10/13/2023
            </Clock>
          </Tray>
        </Taskbar>
      </Desktop>
      <Cursor viewBox="0 0 26 40">
        <path d="M1 0V30L8 24L14 38L20 36L14 22L24 22Z" fill="#fff" />
      </Cursor>
    </Screen>
  );
}

export default App;
